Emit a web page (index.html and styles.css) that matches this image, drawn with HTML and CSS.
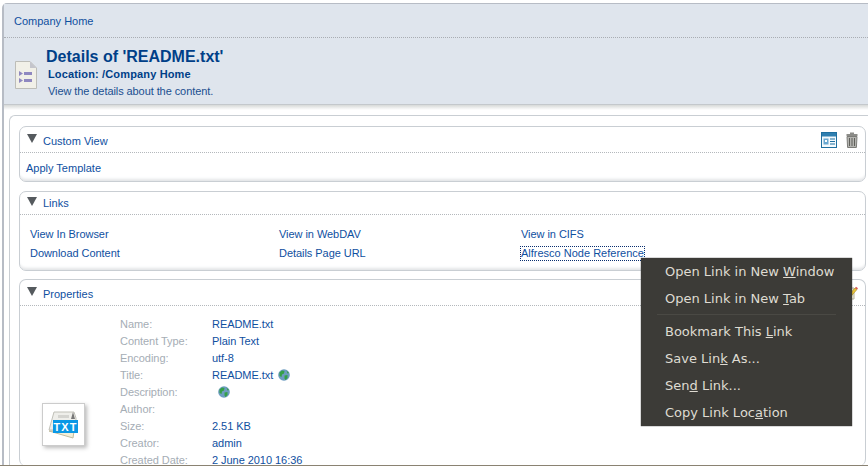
FILE: index.html
```html
<!DOCTYPE html>
<html lang="en">
<head>
    <meta charset="UTF-8">
    <title>Details of 'README.txt'</title>
    <link rel="stylesheet" href="styles.css">
</head>
<body>
<div class="frame">
    <div class="crumbs"><a href="#">Company Home</a></div>
    <div class="title-bar">
        <svg class="doc-icon" width="24" height="30" viewBox="0 0 24 30">
            <path d="M1.5 1.5H16L22.5 8V28.5H1.5Z" fill="#f1f0e8" stroke="#bdbdb8"/>
            <path d="M16 1.5V8H22.5Z" fill="#c4c5cc"/>
            <path d="M5 11l4 2.500-4 2.500ZM5 18l4 2.500-4 2.500Z" fill="#8f88c0"/>
            <path d="M10 12h8v3h-8ZM10 19h8v3h-8Z" fill="#8f88c0"/>
        </svg>
        <div class="title-text">
            <h1>Details of 'README.txt'</h1>
            <div class="location">Location: /Company Home</div>
            <div class="descr">View the details about the content.</div>
        </div>
    </div>
    <div class="title-shadow"></div>

    <div class="inner">
        <div class="panel panel-custom">
            <div class="panel-head">
                <span class="arrow"></span><a href="#">Custom View</a>
                <span class="actions">
                    <svg width="16" height="16" viewBox="0 0 16 16">
                        <rect x="0.5" y="0.5" width="15" height="15" fill="#f4fafd" stroke="#1f6f9f"/>
                        <rect x="1" y="1" width="14" height="3.500" fill="#2f7fb0"/>
                        <rect x="2.500" y="6.500" width="5" height="6" fill="#6aa8d0"/>
                        <rect x="4" y="8" width="2" height="2" fill="#fff"/>
                        <path d="M9 7h5M9 9.500h5M9 12h5" stroke="#1f6f9f"/>
                    </svg>
                    <svg width="12" height="16" viewBox="0 0 12 16">
                        <path d="M4 0.500h4v1.500H4ZM0.500 2h11v2H0.500Z" fill="#8c8c88"/>
                        <path d="M1 4.500h10l-.6 11H1.600Z" fill="#b4b4b0" stroke="#7c7c78"/>
                        <path d="M3.500 6v8M6 6v8M8.500 6v8" stroke="#5f5f5a"/>
                    </svg>
                </span>
            </div>
            <div class="custom-body"><a href="#">Apply Template</a></div>
        </div>

        <div class="panel panel-links">
            <div class="panel-head"><span class="arrow"></span><a href="#">Links</a></div>
            <div class="links-grid">
                <a href="#">View In Browser</a>
                <a href="#">View in WebDAV</a>
                <a href="#">View in CIFS</a>
                <a href="#">Download Content</a>
                <a href="#">Details Page URL</a>
                <a href="#" class="focused">Alfresco Node Reference</a>
            </div>
        </div>

        <div class="panel panel-props">
            <div class="panel-head">
                <span class="arrow"></span><a href="#">Properties</a>
                <span class="actions">
                    <svg width="14" height="14" viewBox="0 0 14 14">
                        <path d="M1 2h9v11H1Z" fill="#f4f1df" stroke="#b5b09a"/>
                        <path d="M4 10l7-8 2 1.500-7 8-2.500 1Z" fill="#e8c33c" stroke="#a88a20" stroke-width="0.6"/>
                        <path d="M11 2l2 1.500 1-1.200-2-1.500Z" fill="#d9534f"/>
                    </svg>
                </span>
            </div>
            <div class="props-body">
                <div class="thumb">
                    <svg width="33" height="28" viewBox="0 0 33 28">
                        <path d="M7 1h20l2 6v12H2Z" fill="#eeeeea" stroke="#c0c0b8"/>
                        <path d="M24 8l2-7 2 7Z" fill="#777"/>
                        <path d="M11 4h11v3H11Z" fill="#d4d4d0"/>
                        <path d="M2 20l24 7 1-7Z" fill="#f3efd8" stroke="#c0bca0"/>
                        <rect x="6" y="9" width="25" height="13" fill="#0a98e6"/>
                        <text x="18.500" y="20" class="thumb-label">TXT</text>
                    </svg>
                </div>
                <dl class="props">
                    <dt>Name:</dt><dd>README.txt</dd>
                    <dt>Content Type:</dt><dd>Plain Text</dd>
                    <dt>Encoding:</dt><dd>utf-8</dd>
                    <dt>Title:</dt><dd>README.txt <svg class="globe" width="12" height="12" viewBox="0 0 12 12"><circle cx="6" cy="6" r="5.800" fill="#6d9cc0"/><path d="M1.500 3.500 4 1.500 6.500 2 6 4.500 4 5.500 3.500 8 1.500 7ZM6.500 6.500 9.500 6 9.500 9 7.500 11 6.500 9.500ZM8.500 1.500 11 4 9.500 4.500Z" fill="#35a047"/></svg></dd>
                    <dt>Description:</dt><dd class="indent"><svg class="globe" width="12" height="12" viewBox="0 0 12 12"><circle cx="6" cy="6" r="5.800" fill="#6d9cc0"/><path d="M1.500 3.500 4 1.500 6.500 2 6 4.500 4 5.500 3.500 8 1.500 7ZM6.500 6.500 9.500 6 9.500 9 7.500 11 6.500 9.500ZM8.500 1.500 11 4 9.500 4.500Z" fill="#35a047"/></svg></dd>
                    <dt>Author:</dt><dd></dd>
                    <dt>Size:</dt><dd>2.51 KB</dd>
                    <dt>Creator:</dt><dd>admin</dd>
                    <dt>Created Date:</dt><dd>2 June 2010 16:36</dd>
                </dl>
            </div>
        </div>
    </div>
</div>
<div class="window-edge"></div>

<ul class="menu">
    <li>Open Link in New <u>W</u>indow</li>
    <li>Open Link in New <u>T</u>ab</li>
    <li class="sep"></li>
    <li>Bookmark This <u>L</u>ink</li>
    <li>Save Lin<u>k</u> As...</li>
    <li>Sen<u>d</u> Link...</li>
    <li>Copy Link Loc<u>a</u>tion</li>
</ul>
</body>
</html>
```

FILE: styles.css
```css
*{
    margin: 0;
    padding: 0;
    box-sizing: border-box;
}
ul{
    list-style: none;
}
a{
    color: #0f4f9f;
    text-decoration: none;
}
html,body{
    height: 467px;
    overflow: hidden;
}
body{
    background: #fff;
    font-family: "Liberation Sans", Arial, sans-serif;
    font-size: 11px;
    color: #0f4f9f;
}
.frame{
    margin: 3px 0 0 2px;
    border-top: 1px solid #b7bcc5;
    border-left: 2px solid #b7bcc5;
    border-top-left-radius: 5px;
}
.crumbs{
    height: 34px;
    padding-left: 10px;
    line-height: 34px;
    background: #dfe5ed;
    border-bottom: 1px dotted #a9adb3;
}
.title-bar{
    height: 67px;
    padding-left: 10px;
    background: #dfe5ed;
    border-bottom: 1px solid #c4c8cc;
    display: flex;
    align-items: flex-start;
}
.title-shadow{
    height: 5px;
    background: linear-gradient(#d7d9d8, #fff);
}
.doc-icon{
    margin-top: 22px;
    flex: none;
}
.title-text{
    margin-left: 8px;
    padding-top: 10px;
}
h1{
    font-size: 16px;
    line-height: 18px;
    font-weight: bold;
    color: #003f88;
}
.location{
    margin-left: 2px;
    line-height: 16px;
    font-weight: bold;
    color: #003f88;
    letter-spacing: 0.15px;
}
.descr{
    margin: 1px 0 0 2px;
    line-height: 16px;
    color: #1a4f90;
    letter-spacing: -0.08px;
}
.inner{
    margin: 5px 0 0 5px;
    padding: 10px 2px 0 9px;
    border-top: 1px solid #c9ced3;
    border-left: 1px solid #c9ced3;
    border-top-left-radius: 6px;
}
.panel{
    border: 1px solid #c9ced3;
    border-radius: 7px;
    box-shadow: inset 0 -4px 3px -2px #e3e5e7;
    margin-bottom: 9px;
}
.panel-custom{
    height: 56px;
}
.panel-links{
    height: 80px;
    margin-bottom: 8px;
}
.panel-props{
    border-bottom: 0;
    box-shadow: none;
    margin-bottom: 0;
}
.panel-head{
    height: 26px;
    padding-left: 7px;
    padding-top: 2px;
    border-bottom: 1px dotted #b4b8bc;
    display: flex;
    align-items: center;
}
.panel-links .panel-head{
    height: 23px;
    padding-top: 0;
}
.arrow{
    width: 0;
    height: 0;
    margin: -4px 6px 0 0;
    border-left: 5px solid transparent;
    border-right: 5px solid transparent;
    border-top: 9px solid #555a5e;
}
.actions{
    margin: -2px 7px 0 auto;
    display: flex;
    align-items: center;
    gap: 9px;
}
.custom-body{
    padding: 8px 0 0 6px;
    line-height: 14px;
}
.links-grid{
    display: grid;
    grid-template-columns: 249px 242px 1fr;
    grid-auto-rows: 19px;
    padding: 10px 0 0 10px;
    line-height: 19px;
    letter-spacing: -0.05px;
}
.focused{
    justify-self: start;
    line-height: 13px;
    height: 13px;
    margin-top: 3px;
    outline: 1px dotted #0a2f6f;
    letter-spacing: 0;
}
.props-body{
    display: flex;
    height: 160px;
}
.thumb{
    width: 43px;
    height: 43px;
    margin: 97px 0 0 22px;
    flex: none;
    background: #fff;
    border: 1px solid #ccc;
    box-shadow: 2px 2px 4px #bbb;
    display: flex;
    align-items: center;
    justify-content: center;
}
.thumb-label{
    font-family: "Liberation Sans", Arial, sans-serif;
    font-size: 11px;
    font-weight: bold;
    fill: #fff;
    text-anchor: middle;
    letter-spacing: 1px;
}
.props{
    margin: 10px 0 0 35px;
    display: grid;
    grid-template-columns: 92px 1fr;
    grid-auto-rows: 17px;
    line-height: 17px;
    letter-spacing: -0.05px;
}
.props dt{
    color: #a5adb5;
}
.props dd{
    color: #0f4f9f;
}
.props .indent{
    padding-left: 4px;
}
.globe{
    vertical-align: -2px;
    margin-left: 2px;
}
.window-edge{
    position: absolute;
    left: 0;
    right: 0;
    bottom: 1px;
    height: 1px;
    background: #8a8272;
}
.menu{
    position: absolute;
    left: 641px;
    top: 258px;
    width: 211px;
    height: 168px;
    background: #3c3b37;
    color: #dfdbd2;
    font-family: "DejaVu Sans", sans-serif;
    font-size: 13px;
    box-shadow: 0 0 1px #222;
}
.menu li{
    height: 27px;
    line-height: 27px;
    padding-left: 24px;
}
.menu .sep{
    height: 4px;
    padding: 0;
    line-height: 0;
}
.menu .sep::after{
    content: "";
    display: block;
    margin: 2px 16px 0;
    height: 1px;
    background: #4a4944;
}
```
